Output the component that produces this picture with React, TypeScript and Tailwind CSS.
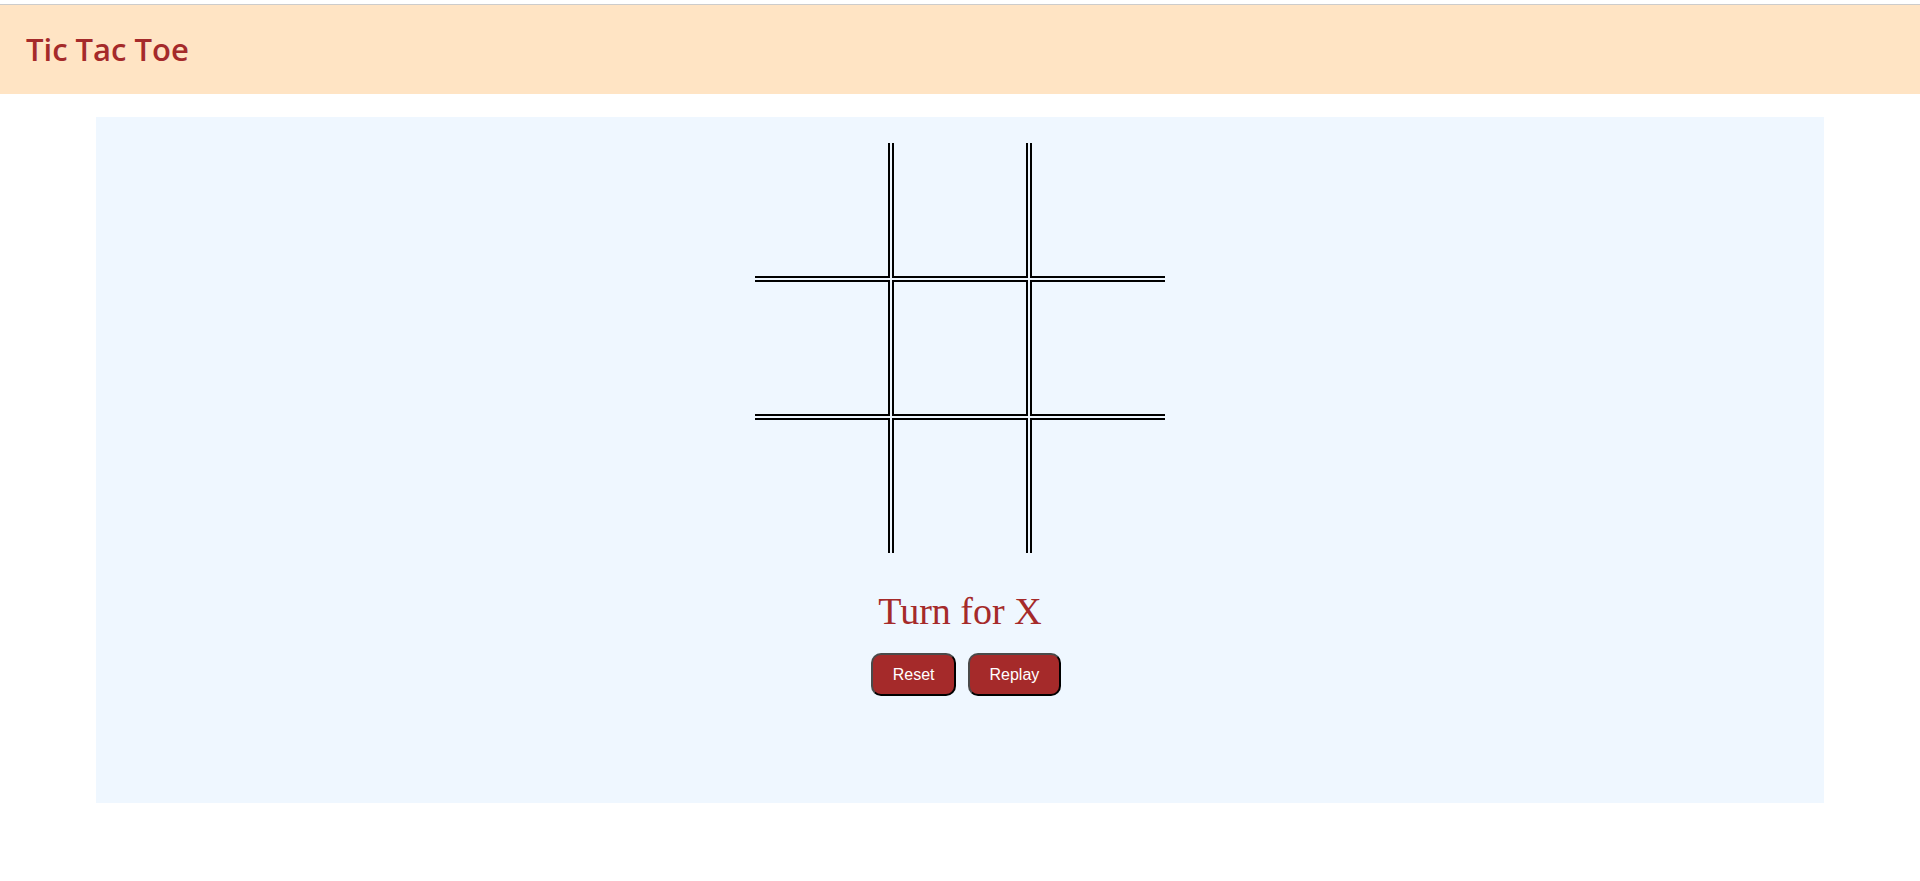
import { useState } from "react";

// border sides per cell, so neighbouring cells draw the double lines
const cellBorders = [
  "border-r-2 border-b-2",
  "border-x-2 border-b-2",
  "border-l-2 border-b-2",
  "border-r-2 border-y-2",
  "border-2",
  "border-l-2 border-y-2",
  "border-r-2 border-t-2",
  "border-x-2 border-t-2",
  "border-l-2 border-t-2",
];

export default function App() {
  const [cells, setCells] = useState<(string | null)[]>(Array(9).fill(null));
  const [turn, setTurn] = useState<"X" | "O">("X");

  const play = (i: number) => {
    if (cells[i]) return;
    const next = [...cells];
    next[i] = turn;
    setCells(next);
    setTurn(turn === "X" ? "O" : "X");
  };

  const reset = () => {
    setCells(Array(9).fill(null));
    setTurn("X");
  };

  return (
    <div className="min-h-[881px] bg-white font-['Liberation_Sans',Arial,sans-serif]">
      {/* Header */}
      <header className="mt-1 flex h-[90px] items-center border-t border-[#cccccc] bg-[#ffe4c4] px-[26px]">
        <h1 className="font-['Open_Sans','Noto_Sans',sans-serif] text-[31px] font-semibold text-[#a52a2a]">
          Tic Tac Toe
        </h1>
      </header>

      {/* Board panel */}
      <main className="mx-[96px] mt-[23px] flex h-[686px] flex-col items-center bg-[#eff7ff] pt-[26px]">
        <div className="grid grid-cols-[135px_136px_135px] grid-rows-[135px_136px_135px] gap-[2px]">
          {cells.map((c, i) => (
            <button
              key={i}
              onClick={() => play(i)}
              className={`${cellBorders[i]} flex items-center justify-center border-black font-['Liberation_Serif',serif] text-6xl text-[#a52a2a]`}
            >
              {c}
            </button>
          ))}
        </div>

        <p className="mt-[37px] font-['Liberation_Serif','Times_New_Roman',serif] text-[38px] leading-[43px] text-[#a52a2a]">
          Turn for {turn}
        </p>

        <div className="mt-[20px] flex">
          <button
            onClick={reset}
            className="ml-[12px] h-[43px] rounded-[10px] border-2 border-t-[#4a4a4a] border-r-black border-b-black border-l-[#4a4a4a] bg-[#a52a2a] px-[19.5px] text-base text-white"
          >
            Reset
          </button>
          <button
            onClick={reset}
            className="ml-[12px] h-[43px] rounded-[10px] border-2 border-t-[#4a4a4a] border-r-black border-b-black border-l-[#4a4a4a] bg-[#a52a2a] px-[19.5px] text-base text-white"
          >
            Replay
          </button>
        </div>
      </main>
    </div>
  );
}
